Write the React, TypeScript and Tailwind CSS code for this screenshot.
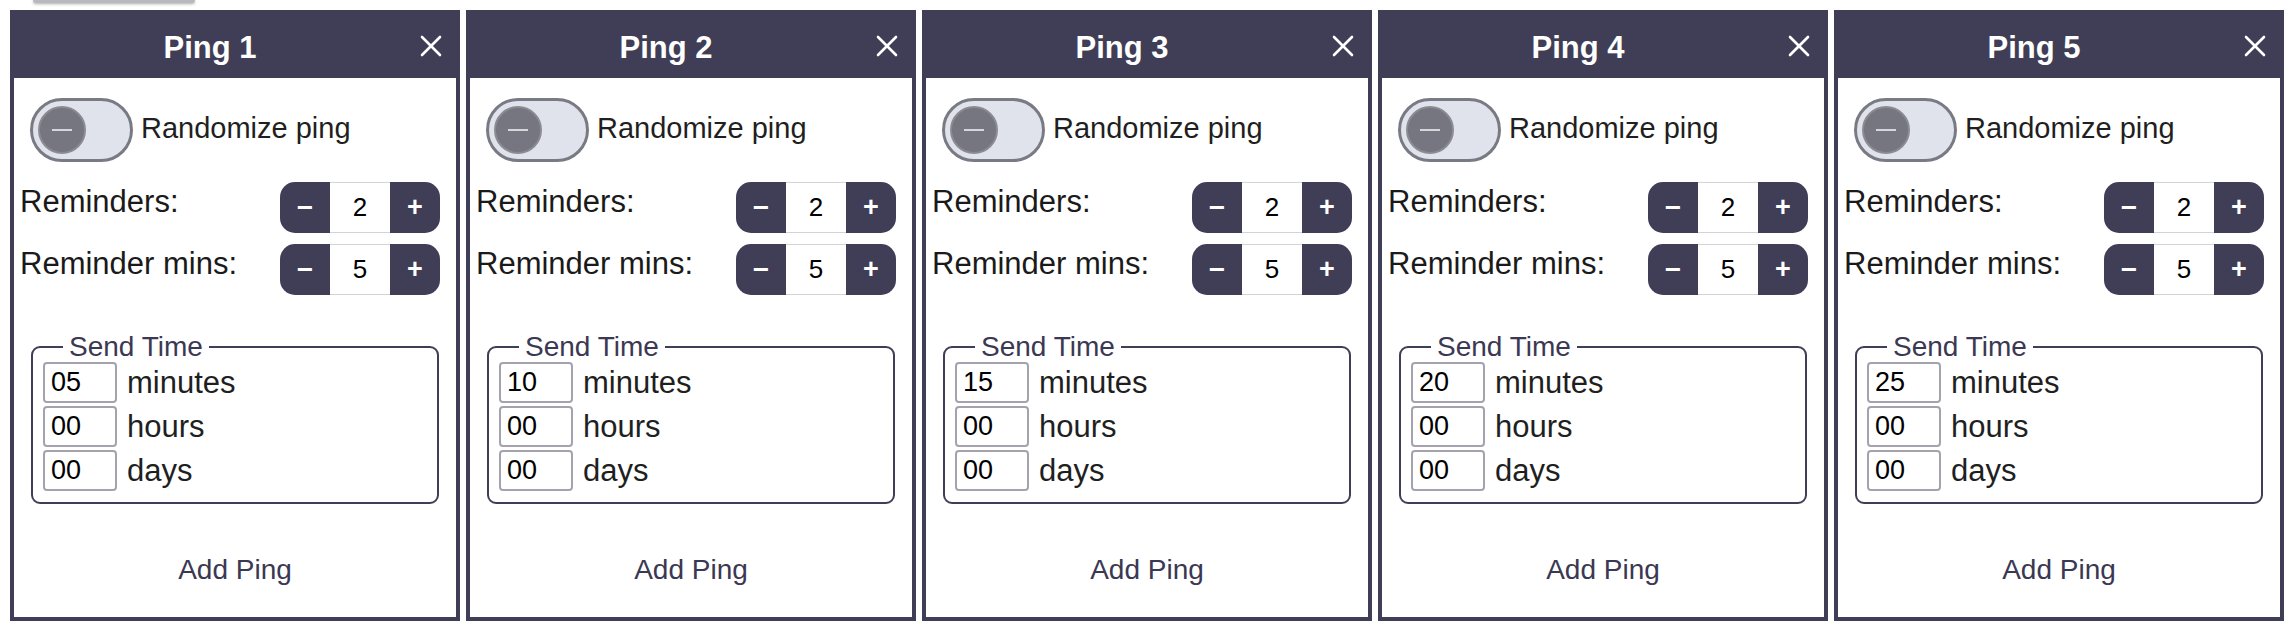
import { useState } from 'react';

interface Ping {
  id: number;
  minutes: string;
  hours: string;
  days: string;
  reminders: number;
  reminderMins: number;
}

const initialPings: Ping[] = [5, 10, 15, 20, 25].map((m, i) => ({
  id: i + 1,
  minutes: String(m).padStart(2, '0'),
  hours: '00',
  days: '00',
  reminders: 2,
  reminderMins: 5,
}));

function Stepper({ value, onChange }: { value: number; onChange: (v: number) => void }) {
  return (
    <div className="flex h-[51px] w-[160px] rounded-[15px] overflow-hidden">
      <button
        onClick={() => onChange(value - 1)}
        className="w-[50px] bg-[#403d56] text-white text-[28px] font-bold flex items-center justify-center cursor-pointer">
        −
      </button>
      <div className="w-[60px] bg-white border-y border-[#d4d4d8] text-black text-[26px] flex items-center justify-center">
        {value}
      </div>
      <button
        onClick={() => onChange(value + 1)}
        className="w-[50px] bg-[#403d56] text-white text-[27px] font-bold flex items-center justify-center cursor-pointer">
        +
      </button>
    </div>
  );
}

function TimeRow({ value, unit }: { value: string; unit: string }) {
  return (
    <div className="flex items-center gap-[10px] h-[41px]">
      <input
        defaultValue={value}
        className="w-[74px] h-[41px] border-2 border-[#a3a2ae] rounded-[4px] pl-[6px] text-[27px] leading-[37px] text-black outline-none font-['Liberation_Sans',sans-serif]"
      />
      <span className="text-[31px] leading-[41px] text-[#1f1f1f]">{unit}</span>
    </div>
  );
}

function PingCard({ ping, onUpdate }: { ping: Ping; onUpdate: (p: Ping) => void }) {
  const [random, setRandom] = useState(false);

  return (
    <div className="w-[450px] h-[611px] border-4 border-[#403d56] bg-white flex flex-col shrink-0">
      {/* header */}
      <div className="h-[64px] bg-[#403d56] flex items-center">
        <h2 className="flex-1 text-center text-white font-bold text-[31px] leading-[40px] pt-[3px]">Ping {ping.id}</h2>
        <button className="w-[50px] h-full flex items-center justify-center cursor-pointer">
          <svg width="22" height="22" viewBox="0 0 22 22" stroke="white" strokeWidth="2.6" strokeLinecap="round">
            <line x1="2" y1="2" x2="20" y2="20" />
            <line x1="20" y1="2" x2="2" y2="20" />
          </svg>
        </button>
      </div>

      <div className="flex flex-col pt-[20px]">
        <div className="flex items-center gap-[8px] pl-[16px]">
          <button
            onClick={() => setRandom(!random)}
            className={`w-[103px] h-[64px] rounded-full border-[3px] border-[#787a84] bg-[#e1e3ec] p-[5px] flex cursor-pointer
              ${random ? 'justify-end' : 'justify-start'}`}>
            <span className="w-[48px] h-[48px] rounded-full bg-[#75767f] border-2 border-[#8a8b93] flex items-center justify-center">
              <span className="w-[20px] h-[2px] bg-[#d6d7dd]" />
            </span>
          </button>
          <span className="text-[29px] leading-[36px] text-[#1f1f1f] pb-[4px]">Randomize ping</span>
        </div>

        <div className="flex items-start justify-between pl-[6px] pr-[16px] mt-[20px]">
          <span className="text-[31px] leading-[40px] text-[#1a1a1a]">Reminders:</span>
          <Stepper value={ping.reminders} onChange={v => onUpdate({ ...ping, reminders: v })} />
        </div>
        <div className="flex items-start justify-between pl-[6px] pr-[16px] mt-[11px]">
          <span className="text-[31px] leading-[40px] text-[#1a1a1a]">Reminder mins:</span>
          <Stepper value={ping.reminderMins} onChange={v => onUpdate({ ...ping, reminderMins: v })} />
        </div>

        <fieldset className="mx-[17px] mt-[36px] border-2 border-[#403d56] rounded-[9px] pl-[10px] pb-[11px] flex flex-col gap-[3px]">
          <legend className="ml-[20px] px-[6px] text-[28px] leading-[31px] text-[#3b3853]">Send Time</legend>
          <TimeRow value={ping.minutes} unit="minutes" />
          <TimeRow value={ping.hours} unit="hours" />
          <TimeRow value={ping.days} unit="days" />
        </fieldset>

        <button className="mt-[50px] text-[28px] leading-[32px] text-[#3b3853] text-center cursor-pointer">
          Add Ping
        </button>
      </div>
    </div>
  );
}

export default function App() {
  const [pings, setPings] = useState<Ping[]>(initialPings);

  const update = (p: Ping) => setPings(prev => prev.map(x => (x.id === p.id ? p : x)));

  return (
    <div className="min-h-screen bg-white font-['Liberation_Sans',Arial,sans-serif]">
      {/* bottom edge of the button above, scrolled off */}
      <div className="h-[10px]">
        <div className="ml-[33px] w-[162px] h-[3px] rounded-b-full bg-[#b9b9bd] shadow-[0_1px_3px_rgba(0,0,0,0.35)]" />
      </div>
      <div className="flex gap-[6px] pl-[10px]">
        {pings.map(p => (
          <PingCard key={p.id} ping={p} onUpdate={update} />
        ))}
      </div>
    </div>
  );
}
